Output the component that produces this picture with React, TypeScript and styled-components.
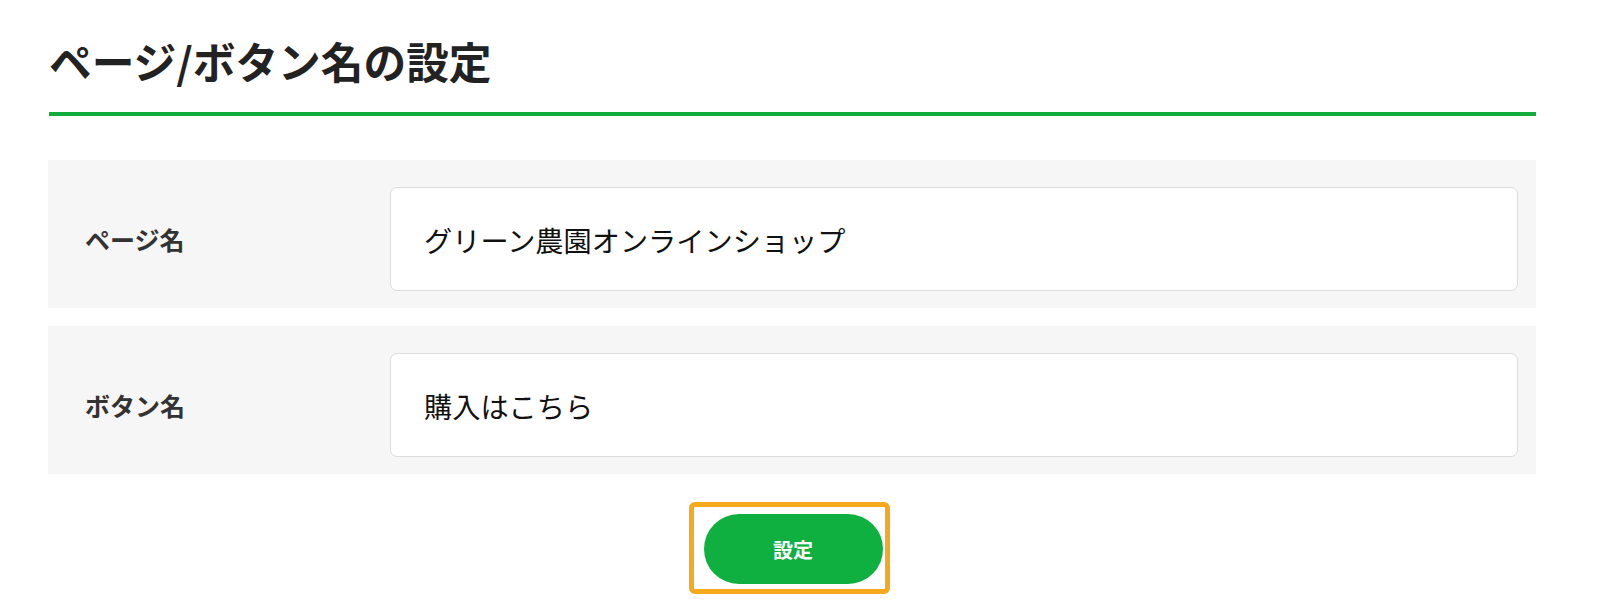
import React from 'react';
import styled, { createGlobalStyle } from 'styled-components';

const GlobalStyle = createGlobalStyle`
  html, body {
    margin: 0;
    padding: 0;
    background: #fff;
  }
  body {
    font-family: "Noto Sans CJK JP", "Noto Sans", sans-serif;
    color: #222;
  }
`;

const fields = [
  { label: 'ページ名', value: 'グリーン農園オンラインショップ' },
  { label: 'ボタン名', value: '購入はこちら' },
];

const App = () => {
  return (
    <>
      <GlobalStyle />
      <Page>
        <Heading>ページ/ボタン名の設定</Heading>
        <Rows>
          {fields.map((f) => (
            <Row key={f.label}>
              <Label>{f.label}</Label>
              <Input type="text" defaultValue={f.value} />
            </Row>
          ))}
        </Rows>
        <Actions>
          <FocusRing>
            <SubmitButton type="button">設定</SubmitButton>
          </FocusRing>
        </Actions>
      </Page>
    </>
  );
};

const Page = styled.div`
  width: 1488px;
  margin-left: 48px;
  padding-top: 29px;
`;

const Heading = styled.h1`
  margin: 0 0 0 1px;
  padding-bottom: 20px;
  font-size: 42.7px;
  line-height: 63px;
  font-weight: 700;
  color: #222;
  border-bottom: 4px solid #12ad3c;
`;

const Rows = styled.div`
  margin-top: 44px;
  display: flex;
  flex-direction: column;
  gap: 18px;
`;

const Row = styled.div`
  display: grid;
  grid-template-columns: 342px 1fr;
  align-items: center;
  padding: 27px 18px 17px 0;
  background: #f6f6f6;
`;

const Label = styled.div`
  padding-left: 37px;
  font-size: 25px;
  font-weight: 700;
  color: #333;
`;

const Input = styled.input`
  box-sizing: border-box;
  width: 100%;
  height: 104px;
  padding: 0 33px;
  border: 1px solid #dcdcdc;
  border-radius: 7px;
  background: #fff;
  font-family: "Noto Sans CJK JP", "Noto Sans", sans-serif;
  font-size: 28.2px;
  color: #111;
  outline: none;
`;

const Actions = styled.div`
  display: flex;
  justify-content: center;
  margin-top: 28px;
  padding-right: 6px;
`;

const FocusRing = styled.div`
  display: flex;
  padding: 7px 2px 5px 10px;
  border: 5px solid #f6a91d;
  border-radius: 6px;
`;

const SubmitButton = styled.button`
  width: 179px;
  height: 70px;
  border: none;
  border-radius: 35px;
  background: #0fb03f;
  color: #fff;
  font-family: "Noto Sans CJK JP", "Noto Sans", sans-serif;
  font-size: 20px;
  font-weight: 700;
  cursor: pointer;
`;

export default App;
